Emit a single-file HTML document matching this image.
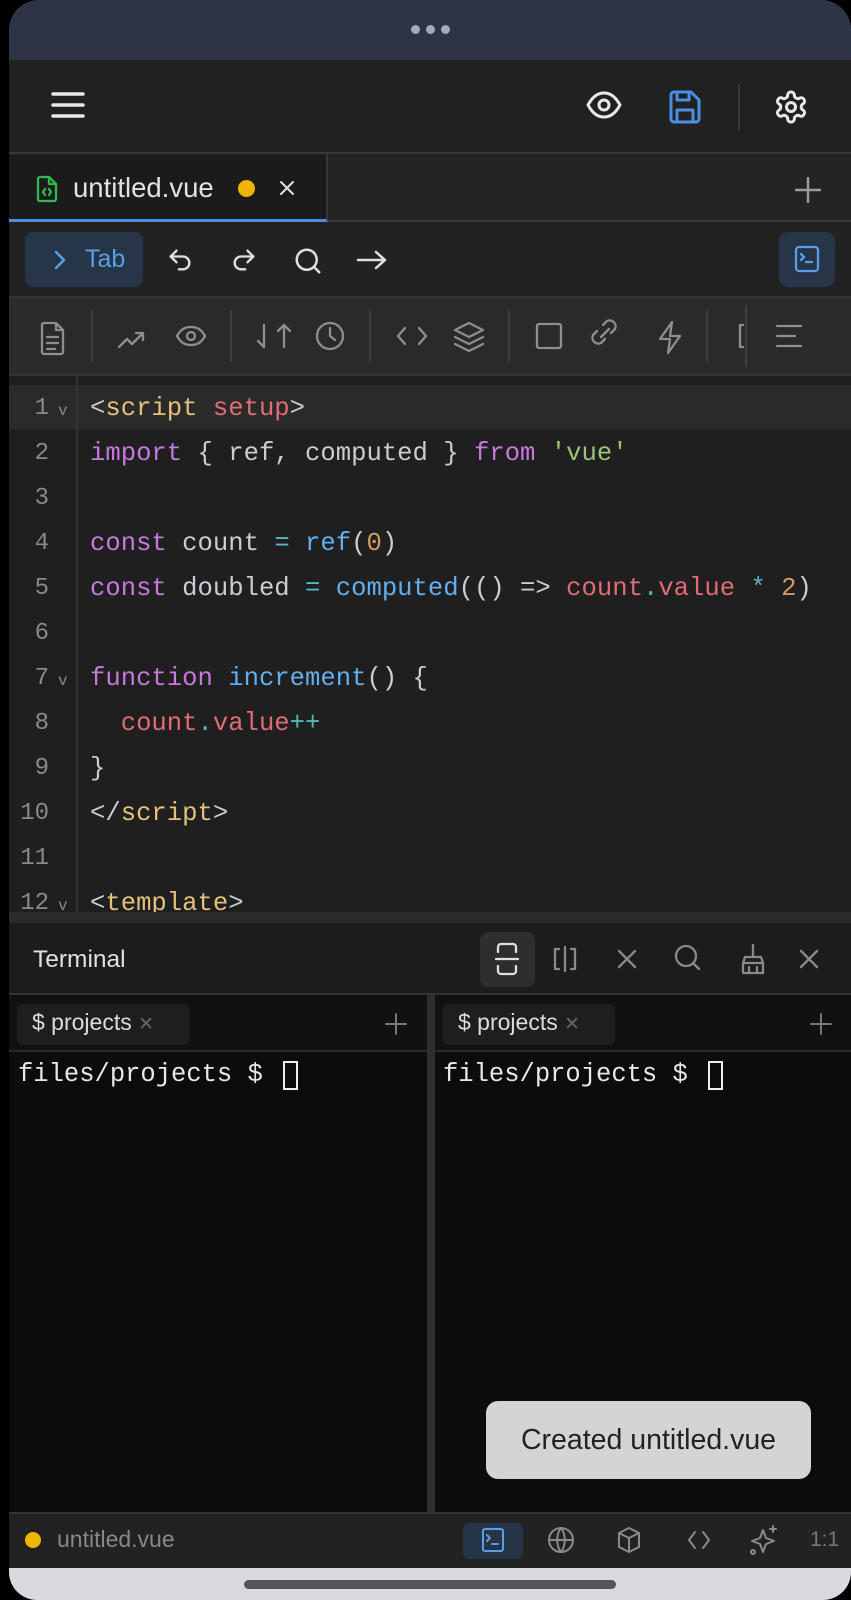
<!DOCTYPE html>
<html><head><meta charset="utf-8"><style>
*{margin:0;padding:0;box-sizing:border-box}
body{width:851px;height:1600px;background:#000;position:relative;overflow:hidden;font-family:"Liberation Sans",sans-serif}
.a{position:absolute}
svg.i{position:absolute;fill:none;stroke-linecap:round;stroke-linejoin:round}
.code{font-family:"Liberation Mono",monospace;font-size:25.6px;color:#c9ccd1;white-space:pre}
.ln{position:absolute;left:9px;width:40px;text-align:right;color:#8a8a8a;font-family:"Liberation Mono",monospace;font-size:24px}
.cl{position:absolute;left:90px}
.k{color:#c678dd}.t{color:#e5c07b}.r{color:#e06c75}.f{color:#61afef}.s{color:#98c379}.n{color:#d19a66}.o{color:#56b6c2}
</style></head><body>
<div class="a" style="left:9px;top:0;width:842px;height:1600px;background:#212121;border-radius:30px;overflow:hidden">
 <div class="a" style="left:0;top:0;width:842px;height:60px;background:#2e3447"></div>
 <div class="a" style="left:402px;top:25px;width:9px;height:9px;border-radius:50%;background:#a5a9b5"></div>
 <div class="a" style="left:417px;top:25px;width:9px;height:9px;border-radius:50%;background:#a5a9b5"></div>
 <div class="a" style="left:432px;top:25px;width:9px;height:9px;border-radius:50%;background:#a5a9b5"></div>
 <div class="a" style="left:0;top:60px;width:842px;height:94px;background:#212121;border-bottom:2px solid #383838"></div>
</div>
<svg class="i" style="left:50px;top:90px" width="36" height="30" stroke="#e8e8e8" stroke-width="3.5"><path d="M3 4h30M3 15h30M3 26h30"/></svg>
<svg class="i" style="left:586px;top:90px" width="36" height="30" stroke="#e8e8e8" stroke-width="3"><path d="M2 15C7 6 12 3 18 3s11 3 16 12c-5 9-10 12-16 12S7 24 2 15z"/><circle cx="18" cy="15" r="5"/></svg>
<svg class="i" style="left:667px;top:89px" width="36" height="36" stroke="#4a90e2" stroke-width="3"><path d="M4 6a3 3 0 0 1 3-3h17l8 8v19a3 3 0 0 1-3 3H7a3 3 0 0 1-3-3z"/><path d="M10 3v8h12V3M10 33V21h16v12"/></svg>
<div class="a" style="left:738px;top:84px;width:2px;height:46px;background:#383838"></div>
<svg class="i" style="left:773px;top:89px" width="36" height="36" viewBox="0 0 24 24" stroke="#e8e8e8" stroke-width="2"><path d="M12.22 2h-.44a2 2 0 0 0-2 2v.18a2 2 0 0 1-1 1.730l-.43.25a2 2 0 0 1-2 0l-.15-.08a2 2 0 0 0-2.73.73l-.22.38a2 2 0 0 0 .73 2.73l.15.1a2 2 0 0 1 1 1.72v.51a2 2 0 0 1-1 1.74l-.15.09a2 2 0 0 0-.73 2.73l.22.38a2 2 0 0 0 2.73.73l.15-.08a2 2 0 0 1 2 0l.43.25a2 2 0 0 1 1 1.73V20a2 2 0 0 0 2 2h.44a2 2 0 0 0 2-2v-.18a2 2 0 0 1 1-1.73l.43-.25a2 2 0 0 1 2 0l.15.08a2 2 0 0 0 2.73-.73l.22-.39a2 2 0 0 0-.73-2.73l-.15-.08a2 2 0 0 1-1-1.74v-.5a2 2 0 0 1 1-1.74l.15-.09a2 2 0 0 0 .73-2.73l-.22-.38a2 2 0 0 0-2.73-.73l-.15.08a2 2 0 0 1-2 0l-.43-.25a2 2 0 0 1-1-1.73V4a2 2 0 0 0-2-2z"/><circle cx="12" cy="12" r="3"/></svg>
<div class="a" style="left:9px;top:155px;width:842px;height:67px;background:#242424;border-bottom:2px solid #383838"></div>
<div class="a" style="left:9px;top:155px;width:319px;height:67px;background:#1b1b1b;border-right:2px solid #383838;border-bottom:3px solid #4a8fd8"></div>
<svg class="i" style="left:36px;top:175px" width="22" height="28" stroke="#2dba4e" stroke-width="2.3"><path d="M2 4a2 2 0 0 1 2-2h9l7 7v15a2 2 0 0 1-2 2H4a2 2 0 0 1-2-2z"/><path d="M13 2v7h7M9 14l-2 3 2 3M13 14l2 3-2 3"/></svg>
<div class="a" style="left:73px;top:172px;font-size:27.5px;color:#e2e2e2">untitled.vue</div>
<div class="a" style="left:238px;top:180px;width:17px;height:17px;border-radius:50%;background:#f0b400"></div>
<svg class="i" style="left:279px;top:180px" width="16" height="16" stroke="#e0e0e0" stroke-width="2"><path d="M2 2l12 12M14 2L2 14"/></svg>
<svg class="i" style="left:795px;top:177px" width="26" height="26" stroke="#9a9a9a" stroke-width="2.5"><path d="M13 1v24M1 13h24"/></svg>
<div class="a" style="left:9px;top:224px;width:842px;height:72px;background:#222"></div>
<div class="a" style="left:25px;top:232px;width:118px;height:55px;background:#263548;border-radius:9px"></div>
<svg class="i" style="left:54px;top:250px" width="12" height="20" stroke="#5b9ee8" stroke-width="2.5"><path d="M2 2l8 8-8 8"/></svg>
<div class="a" style="left:85px;top:245px;font-size:25px;color:#5b9ee8">Tab</div>
<svg class="i" style="left:166px;top:246px" width="28" height="28" viewBox="0 0 24 24" stroke="#e0e0e0" stroke-width="2"><path d="M9 14L4 9l5-5"/><path d="M4 9h10.5a5.5 5.5 0 0 1 0 11H11"/></svg>
<svg class="i" style="left:230px;top:246px" width="28" height="28" viewBox="0 0 24 24" stroke="#e0e0e0" stroke-width="2"><path d="M15 14l5-5-5-5"/><path d="M20 9H9.5a5.5 5.5 0 0 0 0 11H13"/></svg>
<svg class="i" style="left:293px;top:246px" width="30" height="30" viewBox="0 0 24 24" stroke="#e0e0e0" stroke-width="2"><circle cx="11" cy="11" r="8"/><path d="M21 21l-4.3-4.3"/></svg>
<svg class="i" style="left:356px;top:249px" width="32" height="22" stroke="#e0e0e0" stroke-width="2.5"><path d="M2 11h27M20 3l9 8-9 8"/></svg>
<div class="a" style="left:779px;top:232px;width:56px;height:55px;background:#263548;border-radius:9px"></div>
<svg class="i" style="left:794px;top:245px" width="26" height="28" stroke="#5b9ee8" stroke-width="2.3"><rect x="2" y="2" width="22" height="24" rx="3"/><path d="M7 9l3 3-3 3M12 17h6"/></svg>
<div class="a" style="left:9px;top:296px;width:842px;height:80px;background:#2a2a2a;border-top:2px solid #333;border-bottom:2px solid #333"></div>
<svg class="i" style="left:9px;top:301px" width="842" height="80" viewBox="0 0 842 80" stroke="#8e8e8e" stroke-width="2.3">
 <path d="M35 22h12l7 7v22a2 2 0 0 1-2 2H35a2 2 0 0 1-2-2V24a2 2 0 0 1 2-2zM47 22v7h7M38 36h11M38 42h11M38 48h8"/>
 <path d="M83 10v50" stroke="#3e3e3e"/>
 <path d="M110 46l8-8 5 5 11-11M127 32h7v7"/>
 <path d="M168 35c4-7 8-9 14-9s10 2 14 9c-4 7-8 9-14 9s-10-2-14-9z"/><circle cx="182" cy="35" r="4"/>
 <path d="M222 10v50" stroke="#3e3e3e"/>
 <path d="M255 24v22M249 40l6 6M275 46V24M269 30l6-6 6 6" />
 <circle cx="321" cy="35" r="13"/><path d="M321 27v8l5 4"/>
 <path d="M361 10v50" stroke="#3e3e3e"/>
 <path d="M396 27l-7 8 7 8M410 27l7 8-7 8"/>
 <path d="M460 22l14 7-14 7-14-7zM446 36l14 7 14-7M446 43l14 7 14-7"/>
 <path d="M500 10v50" stroke="#3e3e3e"/>
 <rect x="528" y="23" width="24" height="24" rx="2"/>
 <path d="M596 38l-4 4a6 6 0 0 1-8-8l4-4M602 32l4-4a6 6 0 0 0-8-8l-4 4M592 36l8-8"/>
 <path d="M663 21l-12 17h10l-2 14 12-17h-10z"/>
 <path d="M698 10v50" stroke="#3e3e3e"/>
 <path d="M734 24h-3v22h3"/>
 <path d="M737 5v60" stroke="#3e3e3e"/>
 <path d="M768 25h24M768 35h18M768 45h24"/>
</svg>
<div class="a" style="left:9px;top:376px;width:842px;height:548px;background:#1f1f1f"></div>
<div class="a" style="left:9px;top:385px;width:842px;height:45px;background:#2a2a2a"></div>
<div class="a" style="left:76px;top:376px;width:2px;height:540px;background:#333"></div>
<div class="a" style="left:9px;top:912px;width:842px;height:11px;background:#2b2b2b"></div>
<div class="code">
<div class="ln" style="top:395px">1</div><div class="ln" style="top:440px">2</div><div class="ln" style="top:485px">3</div><div class="ln" style="top:530px">4</div><div class="ln" style="top:575px">5</div><div class="ln" style="top:620px">6</div><div class="ln" style="top:665px">7</div><div class="ln" style="top:710px">8</div><div class="ln" style="top:755px">9</div><div class="ln" style="top:800px">10</div><div class="ln" style="top:845px">11</div><div class="ln" style="top:890px">12</div>
<div class="a" style="left:58px;top:402px;font-size:16px;color:#888">v</div>
<div class="a" style="left:58px;top:672px;font-size:16px;color:#888">v</div>
<div class="a" style="left:58px;top:897px;font-size:16px;color:#888">v</div>
<div class="cl" style="top:394px">&lt;<span class="t">script</span> <span class="r">setup</span>&gt;</div>
<div class="cl" style="top:439px"><span class="k">import</span> { ref, computed } <span class="k">from</span> <span class="s">'vue'</span></div>
<div class="cl" style="top:529px"><span class="k">const</span> count <span class="o">=</span> <span class="f">ref</span>(<span class="n">0</span>)</div>
<div class="cl" style="top:574px"><span class="k">const</span> doubled <span class="o">=</span> <span class="f">computed</span>(() =&gt; <span class="r">count</span><span class="o">.</span><span class="r">value</span> <span class="o">*</span> <span class="n">2</span>)</div>
<div class="cl" style="top:664px"><span class="k">function</span> <span class="f">increment</span>() {</div>
<div class="cl" style="top:709px">  <span class="r">count</span><span class="o">.</span><span class="r">value</span><span class="o">++</span></div>
<div class="cl" style="top:754px">}</div>
<div class="cl" style="top:799px">&lt;/<span class="t">script</span>&gt;</div>
<div class="cl" style="top:889px;height:23px;overflow:hidden">&lt;<span class="t">template</span>&gt;</div>
</div>
<div class="a" style="left:9px;top:923px;width:842px;height:72px;background:#1c1c1c;border-bottom:2px solid #333"></div>
<div class="a" style="left:33px;top:946px;font-size:24.5px;color:#e0e0e0">Terminal</div>
<div class="a" style="left:480px;top:932px;width:55px;height:55px;background:#2e2e2e;border-radius:8px"></div>
<svg class="i" style="left:9px;top:923px" width="842" height="72" viewBox="0 0 842 72" stroke="#8a8a8a" stroke-width="2.3">
 <path d="M489 29v-5a3 3 0 0 1 3-3h12a3 3 0 0 1 3 3v5M489 43v5a3 3 0 0 0 3 3h12a3 3 0 0 0 3-3v-5M487 36h22" stroke="#e0e0e0"/>
 <path d="M550 26h-4v20h4M562 26h4v20h-4M556 24v24"/>
 <path d="M610 28l16 16M626 28l-16 16"/>
 <circle cx="677" cy="33" r="10"/><path d="M684 40l6 6"/>
 <path d="M744 22v12M736 34h16l2 6h-20zM734 40v10h20V40M740 44v6M748 44v6"/>
 <path d="M792 28l16 16M808 28l-16 16"/>
</svg>
<div class="a" style="left:9px;top:995px;width:418px;height:517px;background:#0c0c0c"></div>
<div class="a" style="left:435px;top:995px;width:416px;height:517px;background:#0c0c0c"></div>
<div class="a" style="left:427px;top:995px;width:8px;height:517px;background:#2e2e2e"></div>
<div class="a" style="left:9px;top:995px;width:418px;height:57px;background:#111;border-bottom:2px solid #2a2a2a"></div>
<div class="a" style="left:435px;top:995px;width:416px;height:57px;background:#111;border-bottom:2px solid #2a2a2a"></div>
<div class="a" style="left:17px;top:1004px;width:173px;height:41px;background:#1e1e1e;border-radius:6px"></div>
<div class="a" style="left:442px;top:1004px;width:173px;height:41px;background:#1e1e1e;border-radius:6px"></div>
<div class="a" style="left:32px;top:1009px;font-size:23px;color:#ddd">$ projects <span style="color:#666;font-size:19px">✕</span></div>
<div class="a" style="left:458px;top:1009px;font-size:23px;color:#ddd">$ projects <span style="color:#666;font-size:19px">✕</span></div>
<svg class="i" style="left:385px;top:1013px" width="22" height="22" stroke="#777" stroke-width="2"><path d="M11 1v20M1 11h20"/></svg>
<svg class="i" style="left:810px;top:1013px" width="22" height="22" stroke="#777" stroke-width="2"><path d="M11 1v20M1 11h20"/></svg>
<div class="a" style="left:18px;top:1060px;font-family:'Liberation Mono',monospace;font-size:25.5px;color:#e8e8e8;white-space:pre">files/projects $</div>
<div class="a" style="left:443px;top:1060px;font-family:'Liberation Mono',monospace;font-size:25.5px;color:#e8e8e8;white-space:pre">files/projects $</div>
<div class="a" style="left:283px;top:1061px;width:15px;height:29px;border:2px solid #eee"></div>
<div class="a" style="left:708px;top:1061px;width:15px;height:29px;border:2px solid #eee"></div>
<div class="a" style="left:486px;top:1401px;width:325px;height:78px;background:#d4d4d4;border-radius:12px;font-size:28.5px;color:#222;text-align:center;line-height:78px">Created untitled.vue</div>
<div class="a" style="left:9px;top:1512px;width:842px;height:56px;background:#222;border-top:2px solid #333"></div>
<div class="a" style="left:25px;top:1532px;width:16px;height:16px;border-radius:50%;background:#f0b400"></div>
<div class="a" style="left:57px;top:1526px;font-size:23px;color:#888">untitled.vue</div>
<div class="a" style="left:463px;top:1523px;width:60px;height:36px;background:#253447;border-radius:6px"></div>
<svg class="i" style="left:9px;top:1512px" width="842" height="56" viewBox="0 0 842 56" stroke="#8a8a8a" stroke-width="2">
 <rect x="474" y="17" width="20" height="22" rx="2" stroke="#5b9ee8"/><path d="M478 23l3 3-3 3M483 32h6" stroke="#5b9ee8"/>
 <circle cx="552" cy="28" r="12"/><path d="M540 28h24M552 16c-5 6-5 18 0 24M552 16c5 6 5 18 0 24"/>
 <path d="M620 16l10 5v14l-10 5-10-5V21zM610 21l10 5 10-5M620 26v14"/>
 <path d="M686 20l-6 8 6 8M694 20l6 8-6 8"/>
 <path d="M754 18l3 8 8 3-8 3-3 8-3-8-8-3 8-3zM764 14v6M761 17h6"/><circle cx="744" cy="40" r="2"/>
</svg>
<div class="a" style="left:810px;top:1528px;font-size:21px;color:#777">1:1</div>
<div class="a" style="left:9px;top:1568px;width:842px;height:32px;background:#d9d9de;border-radius:0 0 28px 28px"></div>
<div class="a" style="left:244px;top:1580px;width:372px;height:9px;background:#555;border-radius:5px"></div>
</body></html>
